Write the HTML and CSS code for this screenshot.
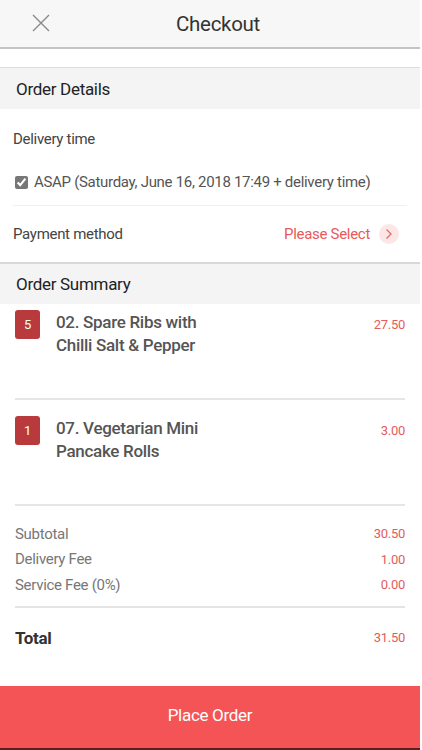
FILE: index.html
```html
<!DOCTYPE html>
<html>
<head>
<meta charset="utf-8">
<link rel="stylesheet" href="styles.css">
</head>
<body>
<div class="page">
  <header class="topbar">
    <span class="close">
      <svg width="18" height="18" viewBox="0 0 18 18"><path d="M1 1L17 17M17 1L1 17" stroke="#8a8a8a" stroke-width="1.4" fill="none"/></svg>
    </span>
    <h1 class="title">Checkout</h1>
  </header>
  <div class="gap"></div>
  <div class="section-head">Order Details</div>
  <div class="details">
    <div class="label delivery">Delivery time</div>
    <label class="asap"><input type="checkbox" checked class="chk"> ASAP (Saturday, June 16, 2018 17:49 + delivery time)</label>
    <div class="pay-row">
      <span class="label">Payment method</span>
      <span class="select">Please Select
        <span class="chev"><svg width="8" height="12" viewBox="0 0 8 12"><path d="M1.5 1.5L6 6L1.5 10.5" stroke="#e46a6a" stroke-width="1.3" fill="none"/></svg></span>
      </span>
    </div>
  </div>
  <div class="section-head sum-head">Order Summary</div>
  <div class="items">
    <div class="item first">
      <span class="qty">5</span>
      <span class="name">02. Spare Ribs with<br>Chilli Salt &amp; Pepper</span>
      <span class="price">27.50</span>
    </div>
    <div class="item second">
      <span class="qty">1</span>
      <span class="name">07. Vegetarian Mini<br>Pancake Rolls</span>
      <span class="price">3.00</span>
    </div>
  </div>
  <div class="fees">
    <div class="fee"><span>Subtotal</span><span class="val">30.50</span></div>
    <div class="fee"><span>Delivery Fee</span><span class="val">1.00</span></div>
    <div class="fee"><span>Service Fee (0%)</span><span class="val">0.00</span></div>
  </div>
  <div class="total"><span class="tl">Total</span><span class="val">31.50</span></div>
  <div class="spacer"></div>
  <button class="place">Place Order</button>
</div>
</body>
</html>
```

FILE: styles.css
```css
* { box-sizing: border-box; }
html, body { margin: 0; padding: 0; background: #fff; }
body { font-family: Roboto, "Noto Sans", sans-serif; height: 750px; overflow: hidden; letter-spacing: -0.3px; }
.page { width: 420px; height: 750px; display: flex; flex-direction: column; background: #fff; border-bottom: 2px solid #5a1f1f; }
.topbar { height: 49px; flex: none; background: #f7f7f7; border-bottom: 2px solid #c4c4c4; display: flex; align-items: center; justify-content: center; position: relative; }
.close { position: absolute; left: 32px; top: 14px; width: 18px; height: 18px; display: block; }
.close svg { display: block; }
.title { margin: 0; font-size: 20.5px; font-weight: 400; color: #333; line-height: 24px; padding-left: 16px; }
.gap { height: 18px; flex: none; }
.section-head { height: 42px; flex: none; background: #f4f4f4; border-top: 1px solid #dedede; padding-left: 16px; display: flex; align-items: center; font-size: 17px; color: #222; }
.details { padding: 0 13px; }
.label { font-size: 15px; color: #444; }
.delivery { padding-top: 20px; line-height: 20px; }
.asap { display: flex; align-items: center; font-size: 15px; color: #555; margin-top: 23px; padding-bottom: 13px; border-bottom: 1px solid #f0f0f0; line-height: 20px; }
.chk { margin: 0 6px 0 2px; width: 13px; height: 13px; accent-color: #777; }
.pay-row { display: flex; justify-content: space-between; align-items: center; height: 56px; padding-right: 8px; }
.select { color: #e85a5a; font-size: 15px; display: flex; align-items: center; }
.chev { width: 20px; height: 20px; border-radius: 50%; background: #fde6e6; margin-left: 9px; display: flex; align-items: center; justify-content: center; }
.chev svg { display: block; }
.sum-head { border-top: 2px solid #d8d8d8; height: 42px; }
.items { padding: 0 15px 0 15px; }
.item { display: flex; align-items: flex-start; border-bottom: 2px solid #e6e6e6; }
.first { height: 96px; padding-top: 6px; }
.second { height: 106px; padding-top: 16px; }
.qty { width: 25px; height: 29px; background: #b83a3c; color: #fff; border-radius: 3px; font-size: 13px; display: flex; align-items: center; justify-content: center; flex: none; }
.name { margin-left: 16px; padding-top: 1px; font-size: 17px; font-weight: 500; color: #555; line-height: 23px; flex: 1; }
.price { font-size: 13px; color: #e35d5d; padding-top: 7px; }
.fees { padding: 15px 15px 0 15px; }
.fee { display: flex; justify-content: space-between; align-items: center; height: 25.5px; font-size: 15px; color: #777; }
.val { color: #e35d5d; font-size: 13px; }
.total { margin: 8px 15px 0 15px; border-top: 2px solid #e4e4e4; height: 62px; display: flex; justify-content: space-between; align-items: center; }
.tl { font-size: 17px; font-weight: 700; color: #333; }
.spacer { flex: 1; }
.place { height: 62px; flex: none; width: 420px; border: 0; background: #f45455; color: #fff; font-family: Roboto, "Noto Sans", sans-serif; font-size: 17px; letter-spacing: -0.3px; padding: 0 0 4px 0; margin: 0; }
```
